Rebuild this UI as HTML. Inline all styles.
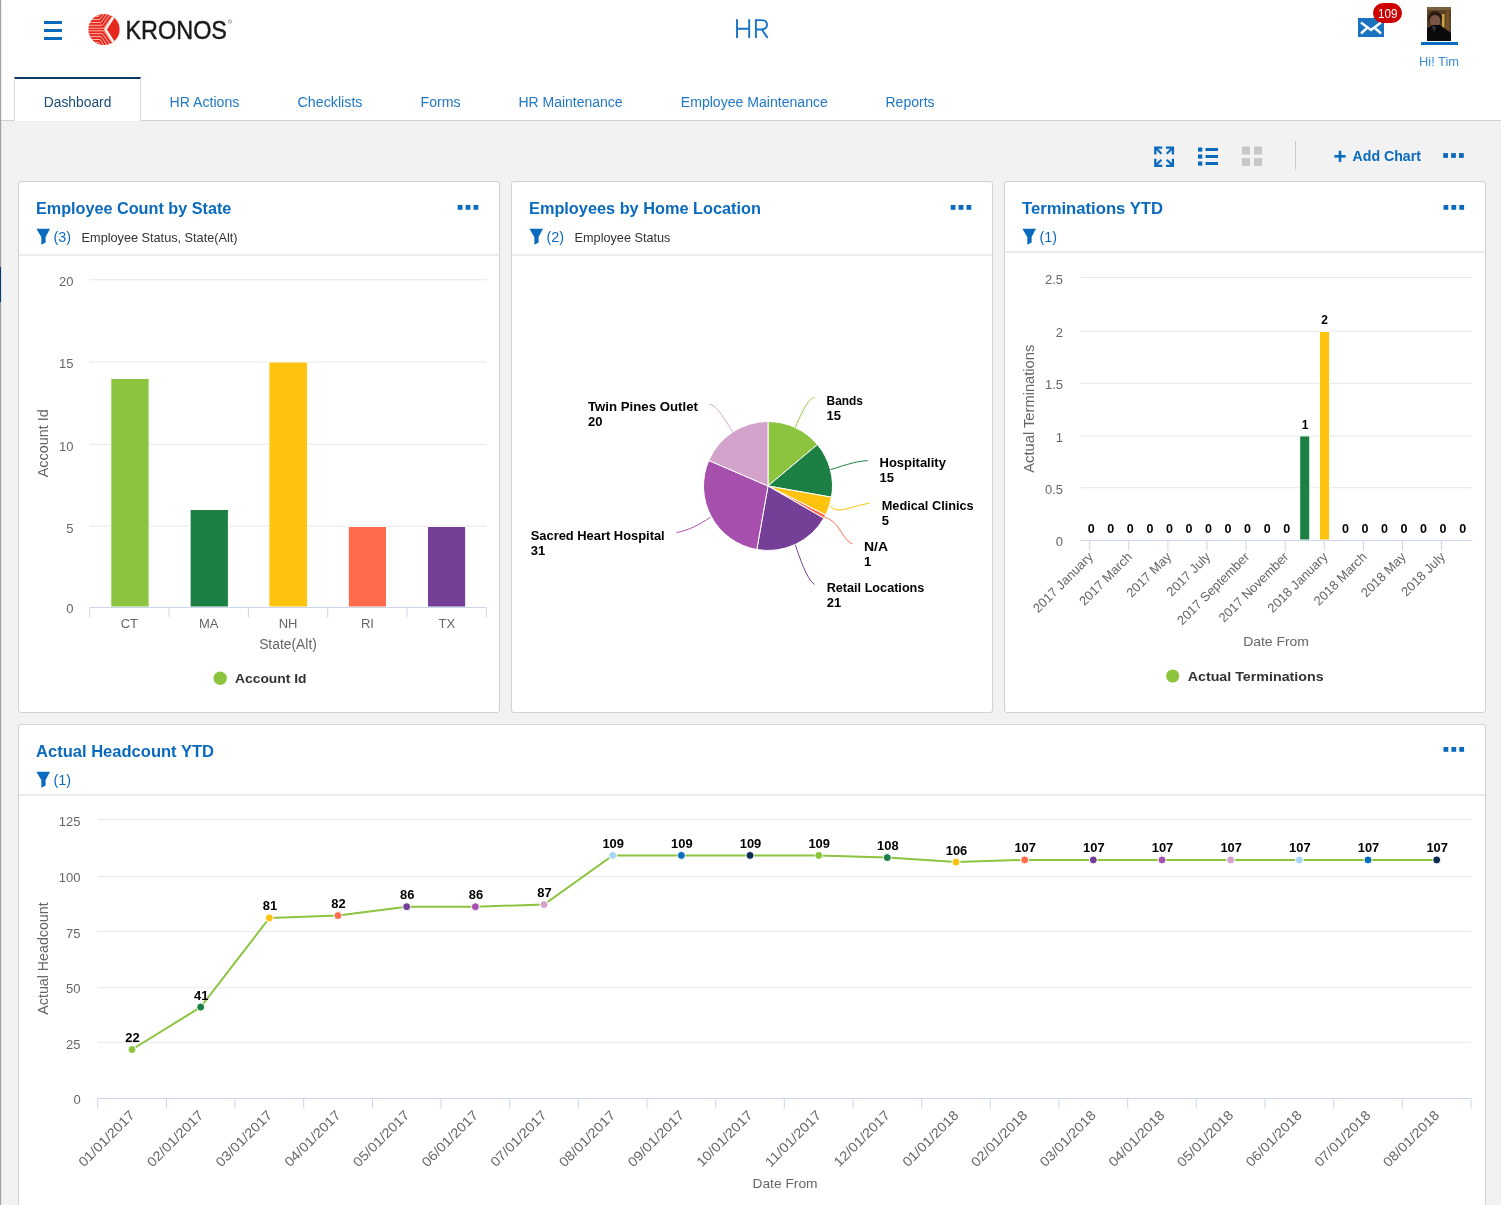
<!DOCTYPE html>
<html><head><meta charset="utf-8"><style>
html,body{margin:0;padding:0;}
body{width:1501px;height:1205px;overflow:hidden;position:relative;background:#f2f2f2;font-family:"Liberation Sans",sans-serif;}
.hdr{position:absolute;left:0;top:0;width:1501px;height:120px;background:#fff;border-bottom:1px solid #d2d2d2;}
.tab{position:absolute;left:14px;top:77px;width:127px;height:44px;background:#fff;border-left:1px solid #dcdcdc;border-right:1px solid #dcdcdc;border-top:2px solid #0d3a66;box-sizing:border-box;}
.lb{position:absolute;left:0;top:0;width:1px;height:1205px;background:#a2a2a2;box-shadow:1px 0 1px rgba(0,0,0,0.08);}
.lbb{position:absolute;left:0;top:267px;width:1px;height:35px;background:#003c78;}
.card{position:absolute;background:#fff;border:1px solid #d2d2d2;border-radius:3px;box-sizing:border-box;}
.sep{position:absolute;height:2px;background:#ececec;}
svg{position:absolute;left:0;top:0;will-change:transform;}
svg text{font-family:"Liberation Sans",sans-serif;}
</style></head><body>
<div class="hdr"></div>
<div class="tab"></div>
<div class="card" style="left:18px;top:181px;width:482px;height:532px"></div>
<div class="card" style="left:511px;top:181px;width:482px;height:532px"></div>
<div class="card" style="left:1004px;top:181px;width:482px;height:532px"></div>
<div class="card" style="left:18px;top:724px;width:1468px;height:520px"></div>
<div class="sep" style="left:19px;top:254px;width:480px"></div>
<div class="sep" style="left:512px;top:254px;width:480px"></div>
<div class="sep" style="left:1005px;top:251px;width:480px"></div>
<div class="sep" style="left:19px;top:794px;width:1466px"></div>
<div class="lb"></div><div class="lbb"></div>
<svg width="1501" height="1205" viewBox="0 0 1501 1205">
<rect x="44" y="21" width="18" height="3" fill="#0a6abd"/>
<rect x="44" y="29" width="18" height="3" fill="#0a6abd"/>
<rect x="44" y="37" width="18" height="3" fill="#0a6abd"/>
<defs><clipPath id="lc"><circle cx="104" cy="29.5" r="15.6"/></clipPath></defs><g clip-path="url(#lc)"><rect x="86" y="12" width="36" height="36" fill="#e6281e"/>
<polyline points="86,28.20 103.72,28.20 116.67,10.20" fill="none" stroke="#ffd0c4" stroke-width="0.85"/>
<polyline points="86,30.80 103.72,30.80 116.67,48.80" fill="none" stroke="#ffd0c4" stroke-width="0.85"/>
<polyline points="86,25.30 102.41,25.30 115.37,7.30" fill="none" stroke="#ffd0c4" stroke-width="0.85"/>
<polyline points="86,33.70 102.41,33.70 115.37,51.70" fill="none" stroke="#ffd0c4" stroke-width="0.85"/>
<polyline points="86,22.40 101.11,22.40 114.06,4.40" fill="none" stroke="#ffd0c4" stroke-width="0.85"/>
<polyline points="86,36.60 101.11,36.60 114.06,54.60" fill="none" stroke="#ffd0c4" stroke-width="0.85"/>
<polyline points="86,19.50 99.80,19.50 112.76,1.50" fill="none" stroke="#ffd0c4" stroke-width="0.85"/>
<polyline points="86,39.50 99.80,39.50 112.76,57.50" fill="none" stroke="#ffd0c4" stroke-width="0.85"/>
<polyline points="86,16.60 98.49,16.60 111.45,-1.40" fill="none" stroke="#ffd0c4" stroke-width="0.85"/>
<polyline points="86,42.40 98.49,42.40 111.45,60.40" fill="none" stroke="#ffd0c4" stroke-width="0.85"/>
<polyline points="116.5,12.5 105.4,29.5 116.5,46.5" fill="none" stroke="#fff6f2" stroke-width="2.4"/>
</g>
<text x="125.5" y="39.2" font-size="26.5" fill="#1a1a1a" textLength="101.5" lengthAdjust="spacingAndGlyphs" stroke="#1a1a1a" stroke-width="0.45">KRONOS</text>
<circle cx="230" cy="21.5" r="1.6" fill="none" stroke="#555" stroke-width="0.6"/>
<path d="M737,19.2 V37.9 M749.2,19.2 V37.9 M737,28.7 H749.2 M755.9,37.9 V20.1 H761 C765,20.1 767,22.2 767,24.8 C767,27.4 765,29.5 761,29.5 H755.9 M761.8,29.5 L767.6,37.9" fill="none" stroke="#1a73c4" stroke-width="1.9"/>
<rect x="1358" y="18" width="26" height="19" fill="#1a73c0"/>
<polyline points="1361,22.5 1371,30 1381,22.5" fill="none" stroke="#fff" stroke-width="2.4"/>
<line x1="1361" y1="33.5" x2="1367" y2="28" stroke="#fff" stroke-width="2.4"/>
<line x1="1381" y1="33.5" x2="1375" y2="28" stroke="#fff" stroke-width="2.4"/>
<rect x="1373" y="3" width="29" height="20" rx="10" fill="#cc0000"/>
<text x="1378" y="18.2" font-size="12.5" fill="#fff" textLength="19.5" lengthAdjust="spacingAndGlyphs">109</text>
<g>
<rect x="1427" y="7" width="24" height="34" fill="#5b4326"/>
<rect x="1427" y="7" width="24" height="3" fill="#7a6040"/>
<rect x="1442" y="14" width="2.5" height="14" fill="#c9a24a"/>
<rect x="1446" y="11" width="3" height="22" fill="#7a5228"/>
<ellipse cx="1435" cy="19" rx="7" ry="8" fill="#2a1c12"/>
<ellipse cx="1435" cy="21" rx="5.5" ry="6" fill="#7a5444"/>
<path d="M1427,28 L1433,25 L1440,25 L1451,33 L1451,41 L1427,41 Z" fill="#0a0a0c"/>
<path d="M1432,26 L1436,27 L1434,32 Z" fill="#3a3a40"/>
</g>
<rect x="1421" y="42" width="37" height="3" fill="#0a6ec0"/>
<text x="1419" y="66.2" font-size="13" fill="#3a8fd4" textLength="40" lengthAdjust="spacingAndGlyphs">Hi! Tim</text>
<text x="43.7" y="106.6" font-size="14" fill="#1d4b73" textLength="67.7" lengthAdjust="spacingAndGlyphs">Dashboard</text>
<text x="169.6" y="106.6" font-size="14" fill="#2178c4" textLength="69.7" lengthAdjust="spacingAndGlyphs">HR Actions</text>
<text x="297.5" y="106.6" font-size="14" fill="#2178c4" textLength="65" lengthAdjust="spacingAndGlyphs">Checklists</text>
<text x="420.5" y="106.6" font-size="14" fill="#2178c4" textLength="40.1" lengthAdjust="spacingAndGlyphs">Forms</text>
<text x="518.4" y="106.6" font-size="14" fill="#2178c4" textLength="104.2" lengthAdjust="spacingAndGlyphs">HR Maintenance</text>
<text x="680.8" y="106.6" font-size="14" fill="#2178c4" textLength="147.1" lengthAdjust="spacingAndGlyphs">Employee Maintenance</text>
<text x="885.5" y="106.6" font-size="14" fill="#2178c4" textLength="49.1" lengthAdjust="spacingAndGlyphs">Reports</text>
<g stroke="#0a6abd" fill="none" stroke-linecap="butt">
<g stroke-width="2.3">
<polyline points="1155.3,154.6 1155.3,147.6 1162.3,147.6"/>
<polyline points="1165.9,147.6 1172.9,147.6 1172.9,154.6"/>
<polyline points="1155.3,158.8 1155.3,165.8 1162.3,165.8"/>
<polyline points="1165.9,165.8 1172.9,165.8 1172.9,158.8"/>
</g><g stroke-width="2.2">
<line x1="1156" y1="148.3" x2="1161.4" y2="153.7"/><line x1="1172.2" y1="148.3" x2="1166.8" y2="153.7"/>
<line x1="1156" y1="165.1" x2="1161.4" y2="159.7"/><line x1="1172.2" y1="165.1" x2="1166.8" y2="159.7"/>
</g></g>
<rect x="1198" y="147.5" width="4.3" height="4.1" fill="#0a6abd"/>
<rect x="1205.5" y="148.0" width="12.5" height="3" fill="#0a6abd"/>
<rect x="1198" y="154.5" width="4.3" height="4.1" fill="#0a6abd"/>
<rect x="1205.5" y="155.0" width="12.5" height="3" fill="#0a6abd"/>
<rect x="1198" y="161.5" width="4.3" height="4.1" fill="#0a6abd"/>
<rect x="1205.5" y="162.0" width="12.5" height="3" fill="#0a6abd"/>
<rect x="1242" y="146.5" width="8" height="8" fill="#c8c8c8"/>
<rect x="1242" y="158" width="8" height="8" fill="#c8c8c8"/>
<rect x="1254" y="146.5" width="8" height="8" fill="#c8c8c8"/>
<rect x="1254" y="158" width="8" height="8" fill="#c8c8c8"/>
<rect x="1295" y="141" width="1" height="28" fill="#c8c8c8"/>
<rect x="1334.4" y="155" width="11.2" height="2.6" fill="#0a6abd"/><rect x="1338.7" y="150.8" width="2.6" height="11.1" fill="#0a6abd"/>
<text x="1352.5" y="160.9" font-size="14" font-weight="bold" fill="#0a6abd" textLength="68.5" lengthAdjust="spacingAndGlyphs">Add Chart</text>
<rect x="1443.2" y="153.1" width="4.8" height="4.8" fill="#0a6abd"/><rect x="1451.1000000000001" y="153.1" width="4.8" height="4.8" fill="#0a6abd"/><rect x="1459.0" y="153.1" width="4.8" height="4.8" fill="#0a6abd"/>
<text x="36" y="214" font-size="16.3" font-weight="bold" fill="#0a6abd" textLength="195.3" lengthAdjust="spacingAndGlyphs">Employee Count by State</text>
<path d="M36.400000000000006,228.7 L50.0,228.7 L45.6,236.89999999999998 L45.6,242.5 L41.400000000000006,244.79999999999998 L41.300000000000004,236.89999999999998 Z" fill="#0a6abd"/>
<text x="53.5" y="242" font-size="14" fill="#0a6abd" textLength="17.6" lengthAdjust="spacingAndGlyphs">(3)</text>
<text x="81.6" y="242" font-size="13" fill="#333" textLength="155.9" lengthAdjust="spacingAndGlyphs">Employee Status, State(Alt)</text>
<text x="529" y="214" font-size="16.3" font-weight="bold" fill="#0a6abd" textLength="232" lengthAdjust="spacingAndGlyphs">Employees by Home Location</text>
<path d="M529.4000000000001,228.7 L543.0,228.7 L538.6,236.89999999999998 L538.6,242.5 L534.4000000000001,244.79999999999998 L534.3000000000001,236.89999999999998 Z" fill="#0a6abd"/>
<text x="546.5" y="242" font-size="14" fill="#0a6abd" textLength="17.6" lengthAdjust="spacingAndGlyphs">(2)</text>
<text x="574.6" y="242" font-size="13" fill="#333" textLength="95.8" lengthAdjust="spacingAndGlyphs">Employee Status</text>
<text x="1022" y="214" font-size="16.3" font-weight="bold" fill="#0a6abd" textLength="141" lengthAdjust="spacingAndGlyphs">Terminations YTD</text>
<path d="M1022.4000000000001,228.7 L1036.0,228.7 L1031.6000000000001,236.89999999999998 L1031.6000000000001,242.5 L1027.4,244.79999999999998 L1027.3,236.89999999999998 Z" fill="#0a6abd"/>
<text x="1039.5" y="242" font-size="14" fill="#0a6abd" textLength="17.6" lengthAdjust="spacingAndGlyphs">(1)</text>
<text x="36" y="757" font-size="16.3" font-weight="bold" fill="#0a6abd" textLength="178" lengthAdjust="spacingAndGlyphs">Actual Headcount YTD</text>
<path d="M36.400000000000006,771.7 L50.0,771.7 L45.6,779.9000000000001 L45.6,785.5 L41.400000000000006,787.8000000000001 L41.300000000000004,779.9000000000001 Z" fill="#0a6abd"/>
<text x="53.5" y="785" font-size="14" fill="#0a6abd" textLength="17.6" lengthAdjust="spacingAndGlyphs">(1)</text>
<rect x="457.7" y="205" width="4.8" height="4.8" fill="#0a6abd"/><rect x="465.59999999999997" y="205" width="4.8" height="4.8" fill="#0a6abd"/><rect x="473.5" y="205" width="4.8" height="4.8" fill="#0a6abd"/>
<rect x="950.7" y="205" width="4.8" height="4.8" fill="#0a6abd"/><rect x="958.6" y="205" width="4.8" height="4.8" fill="#0a6abd"/><rect x="966.5" y="205" width="4.8" height="4.8" fill="#0a6abd"/>
<rect x="1443.5" y="205" width="4.8" height="4.8" fill="#0a6abd"/><rect x="1451.4" y="205" width="4.8" height="4.8" fill="#0a6abd"/><rect x="1459.3" y="205" width="4.8" height="4.8" fill="#0a6abd"/>
<rect x="1443.5" y="747" width="4.8" height="4.8" fill="#0a6abd"/><rect x="1451.4" y="747" width="4.8" height="4.8" fill="#0a6abd"/><rect x="1459.3" y="747" width="4.8" height="4.8" fill="#0a6abd"/>
<line x1="89.7" y1="526.1" x2="486.4" y2="526.1" stroke="#e6e6e6" stroke-width="1"/>
<text x="73.5" y="532.5999999999999" font-size="13" fill="#666" text-anchor="end">5</text>
<line x1="89.7" y1="444.3" x2="486.4" y2="444.3" stroke="#e6e6e6" stroke-width="1"/>
<text x="73.5" y="450.4999999999999" font-size="13" fill="#666" text-anchor="end">10</text>
<line x1="89.7" y1="362.0" x2="486.4" y2="362.0" stroke="#e6e6e6" stroke-width="1"/>
<text x="73.5" y="368.3999999999999" font-size="13" fill="#666" text-anchor="end">15</text>
<line x1="89.7" y1="279.8" x2="486.4" y2="279.8" stroke="#e6e6e6" stroke-width="1"/>
<text x="73.5" y="286.2999999999999" font-size="13" fill="#666" text-anchor="end">20</text>
<text x="73.5" y="612.8" font-size="13" fill="#666" text-anchor="end">0</text>
<rect x="110.8" y="378.5" width="38.3" height="228.5" fill="#8cc43f" stroke="#fff" stroke-width="1"/>
<rect x="190.1" y="509.5" width="38.30000000000001" height="97.5" fill="#1c8044" stroke="#fff" stroke-width="1"/>
<rect x="268.9" y="362.0" width="38.700000000000045" height="245.0" fill="#fec30e" stroke="#fff" stroke-width="1"/>
<rect x="348.3" y="526.5" width="38.19999999999999" height="80.5" fill="#ff6b4b" stroke="#fff" stroke-width="1"/>
<rect x="427.5" y="526.5" width="38.19999999999999" height="80.5" fill="#743f96" stroke="#fff" stroke-width="1"/>
<line x1="89.7" y1="607.5" x2="486.4" y2="607.5" stroke="#ccd6eb" stroke-width="1"/>
<line x1="89.7" y1="607" x2="89.7" y2="617" stroke="#ccd6eb" stroke-width="1"/>
<line x1="169.0" y1="607" x2="169.0" y2="617" stroke="#ccd6eb" stroke-width="1"/>
<line x1="248.4" y1="607" x2="248.4" y2="617" stroke="#ccd6eb" stroke-width="1"/>
<line x1="327.7" y1="607" x2="327.7" y2="617" stroke="#ccd6eb" stroke-width="1"/>
<line x1="407.1" y1="607" x2="407.1" y2="617" stroke="#ccd6eb" stroke-width="1"/>
<line x1="486.4" y1="607" x2="486.4" y2="617" stroke="#ccd6eb" stroke-width="1"/>
<text x="129.4" y="627.6" font-size="13" fill="#666" text-anchor="middle">CT</text>
<text x="208.74" y="627.6" font-size="13" fill="#666" text-anchor="middle">MA</text>
<text x="288.08000000000004" y="627.6" font-size="13" fill="#666" text-anchor="middle">NH</text>
<text x="367.42" y="627.6" font-size="13" fill="#666" text-anchor="middle">RI</text>
<text x="446.76" y="627.6" font-size="13" fill="#666" text-anchor="middle">TX</text>
<text x="288" y="648.7" font-size="14" fill="#666" text-anchor="middle" textLength="57.7" lengthAdjust="spacingAndGlyphs">State(Alt)</text>
<text x="47.9" y="443.3" font-size="14" fill="#666" text-anchor="middle" textLength="68" lengthAdjust="spacingAndGlyphs" transform="rotate(-90 47.9 443.3)">Account Id</text>
<circle cx="220.2" cy="678.2" r="6.7" fill="#8cc43f"/>
<text x="235" y="683.3" font-size="13" font-weight="bold" fill="#333" textLength="71.5" lengthAdjust="spacingAndGlyphs">Account Id</text>
<path d="M768,486 L768.00,421.50 A64.5,64.5 0 0 1 817.41,444.54 Z" fill="#8cc43f" stroke="#fff" stroke-width="1" stroke-linejoin="round"/>
<path d="M768,486 L817.41,444.54 A64.5,64.5 0 0 1 831.52,497.20 Z" fill="#1c8044" stroke="#fff" stroke-width="1" stroke-linejoin="round"/>
<path d="M768,486 L831.52,497.20 A64.5,64.5 0 0 1 825.64,514.95 Z" fill="#fec30e" stroke="#fff" stroke-width="1" stroke-linejoin="round"/>
<path d="M768,486 L825.64,514.95 A64.5,64.5 0 0 1 823.86,518.25 Z" fill="#ff6b4b" stroke="#fff" stroke-width="1" stroke-linejoin="round"/>
<path d="M768,486 L823.86,518.25 A64.5,64.5 0 0 1 756.80,549.52 Z" fill="#743f96" stroke="#fff" stroke-width="1" stroke-linejoin="round"/>
<path d="M768,486 L756.80,549.52 A64.5,64.5 0 0 1 708.78,460.45 Z" fill="#a74fad" stroke="#fff" stroke-width="1" stroke-linejoin="round"/>
<path d="M768,486 L708.78,460.45 A64.5,64.5 0 0 1 768.00,421.50 Z" fill="#d4a3cb" stroke="#fff" stroke-width="1" stroke-linejoin="round"/>
<path d="M709.2,404.3 C716,405 722,415 732.6,431.6" fill="none" stroke="#d4a3cb" stroke-width="1"/>
<path d="M814.7,397.3 C809,399 805,405 795.3,427.4" fill="none" stroke="#8cc43f" stroke-width="1"/>
<path d="M867.7,460.7 C858,461 848,464 830.6,469.6" fill="none" stroke="#1c8044" stroke-width="1"/>
<path d="M869.7,503.2 C858,505 846,510 839,510 C835,510 832,508 830,506.5" fill="none" stroke="#fec30e" stroke-width="1"/>
<path d="M824.5,517.1 C830,519 835,522 840,530 C845,538 848,542 852.5,543.8" fill="none" stroke="#ff6b4b" stroke-width="1"/>
<path d="M795.3,544.9 C800,558 806,578 814.5,584.6" fill="none" stroke="#743f96" stroke-width="1"/>
<path d="M676.6,532.6 C690,530 700,524 710.5,517.3" fill="none" stroke="#a74fad" stroke-width="1"/>
<text x="588" y="411" font-size="13" font-weight="bold" fill="#000" textLength="109.9" lengthAdjust="spacingAndGlyphs">Twin Pines Outlet</text>
<text x="588" y="426.3" font-size="13" font-weight="bold" fill="#000">20</text>
<text x="826.6" y="405" font-size="13" font-weight="bold" fill="#000" textLength="36.4" lengthAdjust="spacingAndGlyphs">Bands</text>
<text x="826.6" y="420.3" font-size="13" font-weight="bold" fill="#000">15</text>
<text x="879.5" y="467" font-size="13" font-weight="bold" fill="#000" textLength="66.4" lengthAdjust="spacingAndGlyphs">Hospitality</text>
<text x="879.5" y="482.3" font-size="13" font-weight="bold" fill="#000">15</text>
<text x="881.7" y="509.9" font-size="13" font-weight="bold" fill="#000" textLength="92" lengthAdjust="spacingAndGlyphs">Medical Clinics</text>
<text x="881.7" y="525.1999999999999" font-size="13" font-weight="bold" fill="#000">5</text>
<text x="864" y="550.6" font-size="13" font-weight="bold" fill="#000" textLength="24" lengthAdjust="spacingAndGlyphs">N/A</text>
<text x="864" y="565.9" font-size="13" font-weight="bold" fill="#000">1</text>
<text x="826.7" y="591.6" font-size="13" font-weight="bold" fill="#000" textLength="97.7" lengthAdjust="spacingAndGlyphs">Retail Locations</text>
<text x="826.7" y="606.9" font-size="13" font-weight="bold" fill="#000">21</text>
<text x="530.7" y="539.7" font-size="13" font-weight="bold" fill="#000" textLength="134" lengthAdjust="spacingAndGlyphs">Sacred Heart Hospital</text>
<text x="530.7" y="555.0" font-size="13" font-weight="bold" fill="#000">31</text>
<line x1="1080.4" y1="487.75" x2="1471.8" y2="487.75" stroke="#e6e6e6" stroke-width="1"/>
<text x="1063" y="494.1499999999999" font-size="13" fill="#666" text-anchor="end">0.5</text>
<line x1="1080.4" y1="436.1" x2="1471.8" y2="436.1" stroke="#e6e6e6" stroke-width="1"/>
<text x="1063" y="441.5999999999999" font-size="13" fill="#666" text-anchor="end">1</text>
<line x1="1080.4" y1="383.3" x2="1471.8" y2="383.3" stroke="#e6e6e6" stroke-width="1"/>
<text x="1063" y="389.04999999999995" font-size="13" fill="#666" text-anchor="end">1.5</text>
<line x1="1080.4" y1="331.2" x2="1471.8" y2="331.2" stroke="#e6e6e6" stroke-width="1"/>
<text x="1063" y="336.49999999999994" font-size="13" fill="#666" text-anchor="end">2</text>
<line x1="1080.4" y1="277.55" x2="1471.8" y2="277.55" stroke="#e6e6e6" stroke-width="1"/>
<text x="1063" y="283.94999999999993" font-size="13" fill="#666" text-anchor="end">2.5</text>
<text x="1063" y="546" font-size="13" fill="#666" text-anchor="end">0</text>
<rect x="1299.7" y="435.9" width="10.1" height="104.10000000000002" fill="#1c8044" stroke="#fff" stroke-width="1"/>
<rect x="1319.5" y="331.5" width="10.1" height="208.5" fill="#fec30e" stroke="#fff" stroke-width="1"/>
<line x1="1080.4" y1="540.5" x2="1471.8" y2="540.5" stroke="#ccd6eb" stroke-width="1"/>
<line x1="1089.7" y1="540" x2="1089.7" y2="550.7" stroke="#ccd6eb" stroke-width="1"/>
<line x1="1128.8" y1="540" x2="1128.8" y2="550.7" stroke="#ccd6eb" stroke-width="1"/>
<line x1="1167.9" y1="540" x2="1167.9" y2="550.7" stroke="#ccd6eb" stroke-width="1"/>
<line x1="1207.0" y1="540" x2="1207.0" y2="550.7" stroke="#ccd6eb" stroke-width="1"/>
<line x1="1246.1" y1="540" x2="1246.1" y2="550.7" stroke="#ccd6eb" stroke-width="1"/>
<line x1="1285.2" y1="540" x2="1285.2" y2="550.7" stroke="#ccd6eb" stroke-width="1"/>
<line x1="1324.3" y1="540" x2="1324.3" y2="550.7" stroke="#ccd6eb" stroke-width="1"/>
<line x1="1363.4" y1="540" x2="1363.4" y2="550.7" stroke="#ccd6eb" stroke-width="1"/>
<line x1="1402.5" y1="540" x2="1402.5" y2="550.7" stroke="#ccd6eb" stroke-width="1"/>
<line x1="1441.6" y1="540" x2="1441.6" y2="550.7" stroke="#ccd6eb" stroke-width="1"/>
<text x="1091.2" y="533" font-size="12.5" font-weight="bold" fill="#000" text-anchor="middle">0</text>
<text x="1110.8" y="533" font-size="12.5" font-weight="bold" fill="#000" text-anchor="middle">0</text>
<text x="1130.3" y="533" font-size="12.5" font-weight="bold" fill="#000" text-anchor="middle">0</text>
<text x="1149.9" y="533" font-size="12.5" font-weight="bold" fill="#000" text-anchor="middle">0</text>
<text x="1169.4" y="533" font-size="12.5" font-weight="bold" fill="#000" text-anchor="middle">0</text>
<text x="1189.0" y="533" font-size="12.5" font-weight="bold" fill="#000" text-anchor="middle">0</text>
<text x="1208.5" y="533" font-size="12.5" font-weight="bold" fill="#000" text-anchor="middle">0</text>
<text x="1228.0" y="533" font-size="12.5" font-weight="bold" fill="#000" text-anchor="middle">0</text>
<text x="1247.6" y="533" font-size="12.5" font-weight="bold" fill="#000" text-anchor="middle">0</text>
<text x="1267.2" y="533" font-size="12.5" font-weight="bold" fill="#000" text-anchor="middle">0</text>
<text x="1286.7" y="533" font-size="12.5" font-weight="bold" fill="#000" text-anchor="middle">0</text>
<text x="1345.4" y="533" font-size="12.5" font-weight="bold" fill="#000" text-anchor="middle">0</text>
<text x="1364.9" y="533" font-size="12.5" font-weight="bold" fill="#000" text-anchor="middle">0</text>
<text x="1384.5" y="533" font-size="12.5" font-weight="bold" fill="#000" text-anchor="middle">0</text>
<text x="1404.0" y="533" font-size="12.5" font-weight="bold" fill="#000" text-anchor="middle">0</text>
<text x="1423.6" y="533" font-size="12.5" font-weight="bold" fill="#000" text-anchor="middle">0</text>
<text x="1443.1" y="533" font-size="12.5" font-weight="bold" fill="#000" text-anchor="middle">0</text>
<text x="1462.7" y="533" font-size="12.5" font-weight="bold" fill="#000" text-anchor="middle">0</text>
<text x="1305.2" y="429" font-size="12" font-weight="bold" fill="#000" text-anchor="middle">1</text>
<text x="1324.7" y="324.2" font-size="12" font-weight="bold" fill="#000" text-anchor="middle">2</text>
<text x="1093.9" y="557.7" font-size="13" fill="#666" text-anchor="end" transform="rotate(-45 1093.9 557.7)">2017 January</text>
<text x="1133.0" y="557.7" font-size="13" fill="#666" text-anchor="end" transform="rotate(-45 1133.0 557.7)">2017 March</text>
<text x="1172.1" y="557.7" font-size="13" fill="#666" text-anchor="end" transform="rotate(-45 1172.1 557.7)">2017 May</text>
<text x="1211.2" y="557.7" font-size="13" fill="#666" text-anchor="end" transform="rotate(-45 1211.2 557.7)">2017 July</text>
<text x="1250.3" y="557.7" font-size="13" fill="#666" text-anchor="end" transform="rotate(-45 1250.3 557.7)">2017 September</text>
<text x="1289.4" y="557.7" font-size="13" fill="#666" text-anchor="end" transform="rotate(-45 1289.4 557.7)">2017 November</text>
<text x="1328.5" y="557.7" font-size="13" fill="#666" text-anchor="end" transform="rotate(-45 1328.5 557.7)">2018 January</text>
<text x="1367.6" y="557.7" font-size="13" fill="#666" text-anchor="end" transform="rotate(-45 1367.6 557.7)">2018 March</text>
<text x="1406.7" y="557.7" font-size="13" fill="#666" text-anchor="end" transform="rotate(-45 1406.7 557.7)">2018 May</text>
<text x="1445.8" y="557.7" font-size="13" fill="#666" text-anchor="end" transform="rotate(-45 1445.8 557.7)">2018 July</text>
<text x="1276" y="646" font-size="13.5" fill="#666" text-anchor="middle" textLength="65.7" lengthAdjust="spacingAndGlyphs">Date From</text>
<text x="1034" y="408.7" font-size="14" fill="#666" text-anchor="middle" textLength="128" lengthAdjust="spacingAndGlyphs" transform="rotate(-90 1034 408.7)">Actual Terminations</text>
<circle cx="1172.7" cy="676" r="6.6" fill="#8cc43f"/>
<text x="1187.7" y="681.2" font-size="13" font-weight="bold" fill="#333" textLength="136" lengthAdjust="spacingAndGlyphs">Actual Terminations</text>
<line x1="97.7" y1="1042.3" x2="1471" y2="1042.3" stroke="#e6e6e6" stroke-width="1"/>
<text x="80.5" y="1049.22" font-size="13" fill="#666" text-anchor="end">25</text>
<line x1="97.7" y1="987.8" x2="1471" y2="987.8" stroke="#e6e6e6" stroke-width="1"/>
<text x="80.5" y="993.4399999999999" font-size="13" fill="#666" text-anchor="end">50</text>
<line x1="97.7" y1="931.5" x2="1471" y2="931.5" stroke="#e6e6e6" stroke-width="1"/>
<text x="80.5" y="937.66" font-size="13" fill="#666" text-anchor="end">75</text>
<line x1="97.7" y1="876.7" x2="1471" y2="876.7" stroke="#e6e6e6" stroke-width="1"/>
<text x="80.5" y="881.8799999999999" font-size="13" fill="#666" text-anchor="end">100</text>
<line x1="97.7" y1="819.7" x2="1471" y2="819.7" stroke="#e6e6e6" stroke-width="1"/>
<text x="80.5" y="826.0999999999999" font-size="13" fill="#666" text-anchor="end">125</text>
<text x="80.8" y="1104" font-size="13" fill="#666" text-anchor="end">0</text>
<line x1="97.7" y1="1098.5" x2="1471" y2="1098.5" stroke="#ccd6eb" stroke-width="1"/>
<line x1="97.7" y1="1098" x2="97.7" y2="1108.8" stroke="#ccd6eb" stroke-width="1"/>
<line x1="166.4" y1="1098" x2="166.4" y2="1108.8" stroke="#ccd6eb" stroke-width="1"/>
<line x1="235.0" y1="1098" x2="235.0" y2="1108.8" stroke="#ccd6eb" stroke-width="1"/>
<line x1="303.7" y1="1098" x2="303.7" y2="1108.8" stroke="#ccd6eb" stroke-width="1"/>
<line x1="372.4" y1="1098" x2="372.4" y2="1108.8" stroke="#ccd6eb" stroke-width="1"/>
<line x1="441.0" y1="1098" x2="441.0" y2="1108.8" stroke="#ccd6eb" stroke-width="1"/>
<line x1="509.7" y1="1098" x2="509.7" y2="1108.8" stroke="#ccd6eb" stroke-width="1"/>
<line x1="578.4" y1="1098" x2="578.4" y2="1108.8" stroke="#ccd6eb" stroke-width="1"/>
<line x1="647.0" y1="1098" x2="647.0" y2="1108.8" stroke="#ccd6eb" stroke-width="1"/>
<line x1="715.7" y1="1098" x2="715.7" y2="1108.8" stroke="#ccd6eb" stroke-width="1"/>
<line x1="784.3" y1="1098" x2="784.3" y2="1108.8" stroke="#ccd6eb" stroke-width="1"/>
<line x1="853.0" y1="1098" x2="853.0" y2="1108.8" stroke="#ccd6eb" stroke-width="1"/>
<line x1="921.7" y1="1098" x2="921.7" y2="1108.8" stroke="#ccd6eb" stroke-width="1"/>
<line x1="990.3" y1="1098" x2="990.3" y2="1108.8" stroke="#ccd6eb" stroke-width="1"/>
<line x1="1059.0" y1="1098" x2="1059.0" y2="1108.8" stroke="#ccd6eb" stroke-width="1"/>
<line x1="1127.7" y1="1098" x2="1127.7" y2="1108.8" stroke="#ccd6eb" stroke-width="1"/>
<line x1="1196.3" y1="1098" x2="1196.3" y2="1108.8" stroke="#ccd6eb" stroke-width="1"/>
<line x1="1265.0" y1="1098" x2="1265.0" y2="1108.8" stroke="#ccd6eb" stroke-width="1"/>
<line x1="1333.7" y1="1098" x2="1333.7" y2="1108.8" stroke="#ccd6eb" stroke-width="1"/>
<line x1="1402.3" y1="1098" x2="1402.3" y2="1108.8" stroke="#ccd6eb" stroke-width="1"/>
<line x1="1471.0" y1="1098" x2="1471.0" y2="1108.8" stroke="#ccd6eb" stroke-width="1"/>
<polyline points="132.0,1049.5 200.7,1007.1 269.4,917.9 338.0,915.6 406.7,906.7 475.4,906.7 544.0,904.5 612.7,855.4 681.4,855.4 750.0,855.4 818.7,855.4 887.3,857.6 956.0,862.1 1024.7,859.9 1093.3,859.9 1162.0,859.9 1230.7,859.9 1299.3,859.9 1368.0,859.9 1436.7,859.9" fill="none" stroke="#8cc43f" stroke-width="2"/>
<circle cx="132.0" cy="1049.5" r="4" fill="#8cc43f" stroke="#fff" stroke-width="1"/>
<text x="132.5" y="1042.0" font-size="12" font-weight="bold" fill="#000" text-anchor="middle" textLength="14.4" lengthAdjust="spacingAndGlyphs">22</text>
<circle cx="200.7" cy="1007.1" r="4" fill="#1c8044" stroke="#fff" stroke-width="1"/>
<text x="201.2" y="999.6" font-size="12" font-weight="bold" fill="#000" text-anchor="middle" textLength="14.4" lengthAdjust="spacingAndGlyphs">41</text>
<circle cx="269.4" cy="917.9" r="4" fill="#fec30e" stroke="#fff" stroke-width="1"/>
<text x="269.9" y="910.4" font-size="12" font-weight="bold" fill="#000" text-anchor="middle" textLength="14.4" lengthAdjust="spacingAndGlyphs">81</text>
<circle cx="338.0" cy="915.6" r="4" fill="#ff6b4b" stroke="#fff" stroke-width="1"/>
<text x="338.5" y="908.1" font-size="12" font-weight="bold" fill="#000" text-anchor="middle" textLength="14.4" lengthAdjust="spacingAndGlyphs">82</text>
<circle cx="406.7" cy="906.7" r="4" fill="#743f96" stroke="#fff" stroke-width="1"/>
<text x="407.2" y="899.2" font-size="12" font-weight="bold" fill="#000" text-anchor="middle" textLength="14.4" lengthAdjust="spacingAndGlyphs">86</text>
<circle cx="475.4" cy="906.7" r="4" fill="#a74fad" stroke="#fff" stroke-width="1"/>
<text x="475.9" y="899.2" font-size="12" font-weight="bold" fill="#000" text-anchor="middle" textLength="14.4" lengthAdjust="spacingAndGlyphs">86</text>
<circle cx="544.0" cy="904.5" r="4" fill="#d4a3cb" stroke="#fff" stroke-width="1"/>
<text x="544.5" y="897.0" font-size="12" font-weight="bold" fill="#000" text-anchor="middle" textLength="14.4" lengthAdjust="spacingAndGlyphs">87</text>
<circle cx="612.7" cy="855.4" r="4" fill="#a8d5f5" stroke="#fff" stroke-width="1"/>
<text x="613.2" y="847.9" font-size="12" font-weight="bold" fill="#000" text-anchor="middle" textLength="21.6" lengthAdjust="spacingAndGlyphs">109</text>
<circle cx="681.4" cy="855.4" r="4" fill="#0a6ebd" stroke="#fff" stroke-width="1"/>
<text x="681.9" y="847.9" font-size="12" font-weight="bold" fill="#000" text-anchor="middle" textLength="21.6" lengthAdjust="spacingAndGlyphs">109</text>
<circle cx="750.0" cy="855.4" r="4" fill="#0c2c50" stroke="#fff" stroke-width="1"/>
<text x="750.5" y="847.9" font-size="12" font-weight="bold" fill="#000" text-anchor="middle" textLength="21.6" lengthAdjust="spacingAndGlyphs">109</text>
<circle cx="818.7" cy="855.4" r="4" fill="#8cc43f" stroke="#fff" stroke-width="1"/>
<text x="819.2" y="847.9" font-size="12" font-weight="bold" fill="#000" text-anchor="middle" textLength="21.6" lengthAdjust="spacingAndGlyphs">109</text>
<circle cx="887.3" cy="857.6" r="4" fill="#1c8044" stroke="#fff" stroke-width="1"/>
<text x="887.8" y="850.1" font-size="12" font-weight="bold" fill="#000" text-anchor="middle" textLength="21.6" lengthAdjust="spacingAndGlyphs">108</text>
<circle cx="956.0" cy="862.1" r="4" fill="#fec30e" stroke="#fff" stroke-width="1"/>
<text x="956.5" y="854.6" font-size="12" font-weight="bold" fill="#000" text-anchor="middle" textLength="21.6" lengthAdjust="spacingAndGlyphs">106</text>
<circle cx="1024.7" cy="859.9" r="4" fill="#ff6b4b" stroke="#fff" stroke-width="1"/>
<text x="1025.2" y="852.4" font-size="12" font-weight="bold" fill="#000" text-anchor="middle" textLength="21.6" lengthAdjust="spacingAndGlyphs">107</text>
<circle cx="1093.3" cy="859.9" r="4" fill="#743f96" stroke="#fff" stroke-width="1"/>
<text x="1093.8" y="852.4" font-size="12" font-weight="bold" fill="#000" text-anchor="middle" textLength="21.6" lengthAdjust="spacingAndGlyphs">107</text>
<circle cx="1162.0" cy="859.9" r="4" fill="#a74fad" stroke="#fff" stroke-width="1"/>
<text x="1162.5" y="852.4" font-size="12" font-weight="bold" fill="#000" text-anchor="middle" textLength="21.6" lengthAdjust="spacingAndGlyphs">107</text>
<circle cx="1230.7" cy="859.9" r="4" fill="#d4a3cb" stroke="#fff" stroke-width="1"/>
<text x="1231.2" y="852.4" font-size="12" font-weight="bold" fill="#000" text-anchor="middle" textLength="21.6" lengthAdjust="spacingAndGlyphs">107</text>
<circle cx="1299.3" cy="859.9" r="4" fill="#a8d5f5" stroke="#fff" stroke-width="1"/>
<text x="1299.8" y="852.4" font-size="12" font-weight="bold" fill="#000" text-anchor="middle" textLength="21.6" lengthAdjust="spacingAndGlyphs">107</text>
<circle cx="1368.0" cy="859.9" r="4" fill="#0a6ebd" stroke="#fff" stroke-width="1"/>
<text x="1368.5" y="852.4" font-size="12" font-weight="bold" fill="#000" text-anchor="middle" textLength="21.6" lengthAdjust="spacingAndGlyphs">107</text>
<circle cx="1436.7" cy="859.9" r="4" fill="#0c2c50" stroke="#fff" stroke-width="1"/>
<text x="1437.2" y="852.4" font-size="12" font-weight="bold" fill="#000" text-anchor="middle" textLength="21.6" lengthAdjust="spacingAndGlyphs">107</text>
<text x="135.5" y="1116" font-size="13.5" fill="#666" text-anchor="end" textLength="73" lengthAdjust="spacingAndGlyphs" transform="rotate(-45 135.5 1116)">01/01/2017</text>
<text x="204.2" y="1116" font-size="13.5" fill="#666" text-anchor="end" textLength="73" lengthAdjust="spacingAndGlyphs" transform="rotate(-45 204.2 1116)">02/01/2017</text>
<text x="272.9" y="1116" font-size="13.5" fill="#666" text-anchor="end" textLength="73" lengthAdjust="spacingAndGlyphs" transform="rotate(-45 272.9 1116)">03/01/2017</text>
<text x="341.5" y="1116" font-size="13.5" fill="#666" text-anchor="end" textLength="73" lengthAdjust="spacingAndGlyphs" transform="rotate(-45 341.5 1116)">04/01/2017</text>
<text x="410.2" y="1116" font-size="13.5" fill="#666" text-anchor="end" textLength="73" lengthAdjust="spacingAndGlyphs" transform="rotate(-45 410.2 1116)">05/01/2017</text>
<text x="478.9" y="1116" font-size="13.5" fill="#666" text-anchor="end" textLength="73" lengthAdjust="spacingAndGlyphs" transform="rotate(-45 478.9 1116)">06/01/2017</text>
<text x="547.5" y="1116" font-size="13.5" fill="#666" text-anchor="end" textLength="73" lengthAdjust="spacingAndGlyphs" transform="rotate(-45 547.5 1116)">07/01/2017</text>
<text x="616.2" y="1116" font-size="13.5" fill="#666" text-anchor="end" textLength="73" lengthAdjust="spacingAndGlyphs" transform="rotate(-45 616.2 1116)">08/01/2017</text>
<text x="684.9" y="1116" font-size="13.5" fill="#666" text-anchor="end" textLength="73" lengthAdjust="spacingAndGlyphs" transform="rotate(-45 684.9 1116)">09/01/2017</text>
<text x="753.5" y="1116" font-size="13.5" fill="#666" text-anchor="end" textLength="73" lengthAdjust="spacingAndGlyphs" transform="rotate(-45 753.5 1116)">10/01/2017</text>
<text x="822.2" y="1116" font-size="13.5" fill="#666" text-anchor="end" textLength="73" lengthAdjust="spacingAndGlyphs" transform="rotate(-45 822.2 1116)">11/01/2017</text>
<text x="890.8" y="1116" font-size="13.5" fill="#666" text-anchor="end" textLength="73" lengthAdjust="spacingAndGlyphs" transform="rotate(-45 890.8 1116)">12/01/2017</text>
<text x="959.5" y="1116" font-size="13.5" fill="#666" text-anchor="end" textLength="73" lengthAdjust="spacingAndGlyphs" transform="rotate(-45 959.5 1116)">01/01/2018</text>
<text x="1028.2" y="1116" font-size="13.5" fill="#666" text-anchor="end" textLength="73" lengthAdjust="spacingAndGlyphs" transform="rotate(-45 1028.2 1116)">02/01/2018</text>
<text x="1096.8" y="1116" font-size="13.5" fill="#666" text-anchor="end" textLength="73" lengthAdjust="spacingAndGlyphs" transform="rotate(-45 1096.8 1116)">03/01/2018</text>
<text x="1165.5" y="1116" font-size="13.5" fill="#666" text-anchor="end" textLength="73" lengthAdjust="spacingAndGlyphs" transform="rotate(-45 1165.5 1116)">04/01/2018</text>
<text x="1234.2" y="1116" font-size="13.5" fill="#666" text-anchor="end" textLength="73" lengthAdjust="spacingAndGlyphs" transform="rotate(-45 1234.2 1116)">05/01/2018</text>
<text x="1302.8" y="1116" font-size="13.5" fill="#666" text-anchor="end" textLength="73" lengthAdjust="spacingAndGlyphs" transform="rotate(-45 1302.8 1116)">06/01/2018</text>
<text x="1371.5" y="1116" font-size="13.5" fill="#666" text-anchor="end" textLength="73" lengthAdjust="spacingAndGlyphs" transform="rotate(-45 1371.5 1116)">07/01/2018</text>
<text x="1440.2" y="1116" font-size="13.5" fill="#666" text-anchor="end" textLength="73" lengthAdjust="spacingAndGlyphs" transform="rotate(-45 1440.2 1116)">08/01/2018</text>
<text x="785" y="1187.9" font-size="13.5" fill="#666" text-anchor="middle" textLength="65" lengthAdjust="spacingAndGlyphs">Date From</text>
<text x="48" y="958.5" font-size="14" fill="#666" text-anchor="middle" textLength="112.3" lengthAdjust="spacingAndGlyphs" transform="rotate(-90 48 958.5)">Actual Headcount</text>
</svg>
</body></html>
